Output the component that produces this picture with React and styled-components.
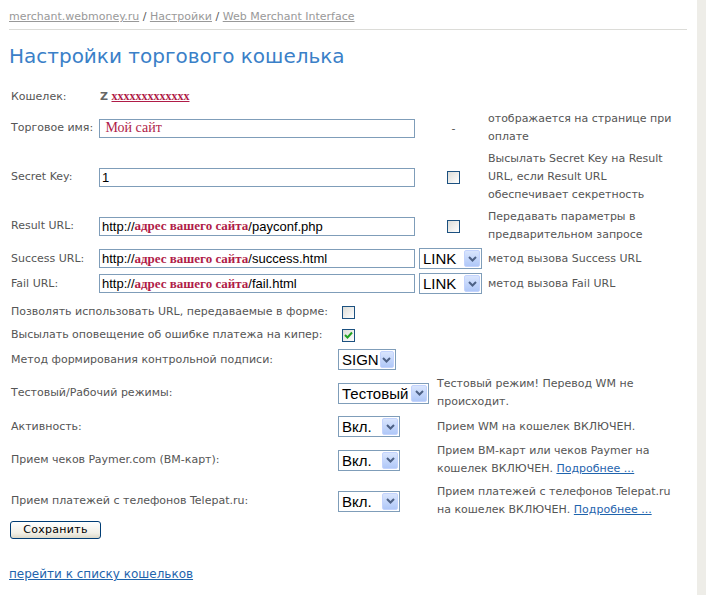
import styled, { createGlobalStyle } from 'styled-components'

const Global = createGlobalStyle`
  html, body { margin: 0; padding: 0; background: #eeede8; }
  body {
    font-family: "DejaVu Sans", Verdana, sans-serif;
    font-size: 11px;
    color: #555;
  }
`

const Page = styled.div`
  width: 697px;
  min-height: 595px;
  box-sizing: border-box;
  background: #fff;
  padding: 8px 10px 20px 9px;
`

const Crumbs = styled.div`
  line-height: 18px;
  padding-bottom: 3px;
  border-bottom: 1px solid #dcdcd8;
  color: #555;

  a {
    color: #999;
    text-decoration: underline;
  }
`

const Title = styled.h1`
  margin: 14px 0 0;
  font-size: 20px;
  line-height: 24px;
  font-weight: normal;
  color: #3a80c8;
`

const TopGrid = styled.div`
  margin-top: 19px;
  padding-left: 2px;
  display: grid;
  grid-template-columns: 88px 320px 69px 1fr;
  row-gap: 4px;
  align-items: center;
`

const BottomGrid = styled.div`
  margin-top: 9px;
  padding-left: 2px;
  display: grid;
  grid-template-columns: 327px 99px 1fr;
  row-gap: 5px;
  align-items: center;
`

const Label = styled.div`
  line-height: 18px;
  white-space: nowrap;
`

const Desc = styled.div`
  line-height: 18px;
`

const Cell = styled.div`
  display: flex;
  align-items: center;
  justify-content: ${(p) => (p.$center ? 'center' : 'flex-start')};
  grid-column: ${(p) => p.$span || 'auto'};
  padding-left: ${(p) => p.$indent || 0}px;
`

const Wallet = styled.div`
  grid-column: 2 / 5;
  line-height: 18px;
  padding-left: 1px;

  b {
    color: #666;
    font-weight: bold;
  }
`

const Red = styled.span`
  font-family: "Liberation Serif", "Times New Roman", serif;
  font-size: ${(p) => p.$size || 12}px;
  font-weight: ${(p) => (p.$bold ? 'bold' : 'normal')};
  color: #b01c48;
  text-decoration: ${(p) => (p.$under ? 'underline' : 'none')};
`

const Field = styled.div`
  width: 316px;
  height: 19px;
  box-sizing: border-box;
  border: 1px solid #7f9db9;
  padding: 0 2px;
  display: flex;
  align-items: center;
  white-space: nowrap;
  font-family: "Liberation Sans", Arial, sans-serif;
  font-size: 13px;
  color: #000;
  background: #fff;
`

const SelectBox = styled.div`
  width: ${(p) => p.$w}px;
  height: 21px;
  box-sizing: border-box;
  border: 1px solid #7f9db9;
  display: flex;
  align-items: stretch;
  background: #fff;
  font-family: "Liberation Sans", Arial, sans-serif;
  font-size: 15px;
  color: #000;
`

const SelectText = styled.span`
  flex: 1;
  display: flex;
  align-items: center;
  padding-left: 3px;
`

const Arrow = styled.span`
  width: 16px;
  margin: 1px;
  border-radius: 2px;
  background: linear-gradient(#d9e5fd, #b0c8f8);
  border: 1px solid #c3d3fd;
  box-sizing: border-box;
  display: flex;
  align-items: center;
  justify-content: center;
`

const Check = styled.span`
  width: 13px;
  height: 13px;
  box-sizing: border-box;
  border: 1px solid #1c5180;
  background: linear-gradient(135deg, #dcdcd7, #fff);
  display: inline-flex;
  align-items: center;
  justify-content: center;
`

const Button = styled.button`
  margin: 2px 0 0 1px;
  width: 91px;
  height: 18px;
  padding: 0;
  border: 1px solid #003c74;
  border-radius: 3px;
  background: linear-gradient(#fff, #f1efe6 70%, #dcd8c8);
  font-family: "DejaVu Sans", Verdana, sans-serif;
  font-size: 11px;
  letter-spacing: 0.3px;
  line-height: 14px;
  color: #000;
`

const Link = styled.a`
  display: inline-block;
  margin-top: 26px;
  font-size: 12px;
  line-height: 18px;
  color: #1f64ad;
  text-decoration: underline;
`

const More = styled.a`
  color: #1f64ad;
  text-decoration: underline;
`

const Select = ({ value, w }) => (
  <SelectBox $w={w}>
    <SelectText>{value}</SelectText>
    <Arrow>
      <svg width="9" height="6" viewBox="0 0 9 6">
        <path d="M1 1 L4.5 4.5 L8 1" fill="none" stroke="#4d6185" strokeWidth="2" />
      </svg>
    </Arrow>
  </SelectBox>
)

const CheckBox = ({ checked }) => (
  <Check>
    {checked && (
      <svg width="9" height="8" viewBox="0 0 9 8">
        <path d="M1 4 L3.5 6.5 L8 1.5" fill="none" stroke="#21a121" strokeWidth="2" />
      </svg>
    )}
  </Check>
)

const Site = () => (
  <>
    http://<Red $bold $size={13}>адрес вашего сайта</Red>
  </>
)

export default function App() {
  return (
    <>
      <Global />
      <Page>
        <Crumbs>
          <a>merchant.webmoney.ru</a> / <a>Настройки</a> / <a>Web Merchant Interface</a>
        </Crumbs>
        <Title>Настройки торгового кошелька</Title>

        <TopGrid>
          <Label>Кошелек:</Label>
          <Wallet>
            <b>Z</b> <Red $bold $under $size={12}>xxxxxxxxxxxxx</Red>
          </Wallet>

          <Label>Торговое имя:</Label>
          <Cell>
            <Field>
              <Red $size={14}>&nbsp;Мой сайт</Red>
            </Field>
          </Cell>
          <Cell $center>-</Cell>
          <Desc>отображается на странице при оплате</Desc>

          <Label>Secret Key:</Label>
          <Cell>
            <Field>1</Field>
          </Cell>
          <Cell $center>
            <CheckBox />
          </Cell>
          <Desc>Высылать Secret Key на Result URL, если Result URL обеспечивает секретность</Desc>

          <Label>Result URL:</Label>
          <Cell>
            <Field>
              <Site />/payconf.php
            </Field>
          </Cell>
          <Cell $center>
            <CheckBox />
          </Cell>
          <Desc>Передавать параметры в предварительном запросе</Desc>

          <Label>Success URL:</Label>
          <Cell>
            <Field>
              <Site />/success.html
            </Field>
          </Cell>
          <Cell>
            <Select value="LINK" w={63} />
          </Cell>
          <Desc>метод вызова Success URL</Desc>

          <Label>Fail URL:</Label>
          <Cell>
            <Field>
              <Site />/fail.html
            </Field>
          </Cell>
          <Cell>
            <Select value="LINK" w={63} />
          </Cell>
          <Desc>метод вызова Fail URL</Desc>
        </TopGrid>

        <BottomGrid>
          <Label>Позволять использовать URL, передаваемые в форме:</Label>
          <Cell $span="2 / 4" $indent={4}>
            <CheckBox />
          </Cell>

          <Label>Высылать оповещение об ошибке платежа на кипер:</Label>
          <Cell $span="2 / 4" $indent={4}>
            <CheckBox checked />
          </Cell>

          <Label>Метод формирования контрольной подписи:</Label>
          <Cell $span="2 / 4">
            <Select value="SIGN" w={58} />
          </Cell>

          <Label>Тестовый/Рабочий режимы:</Label>
          <Cell>
            <Select value="Тестовый" w={91} />
          </Cell>
          <Desc>Тестовый режим! Перевод WM не происходит.</Desc>

          <Label>Активность:</Label>
          <Cell>
            <Select value="Вкл." w={62} />
          </Cell>
          <Desc>Прием WM на кошелек ВКЛЮЧЕН.</Desc>

          <Label>Прием чеков Paymer.com (ВМ-карт):</Label>
          <Cell>
            <Select value="Вкл." w={62} />
          </Cell>
          <Desc>
            Прием ВМ-карт или чеков Paymer на кошелек ВКЛЮЧЕН. <More>Подробнее ...</More>
          </Desc>

          <Label>Прием платежей с телефонов Telepat.ru:</Label>
          <Cell>
            <Select value="Вкл." w={62} />
          </Cell>
          <Desc>
            Прием платежей с телефонов Telepat.ru на кошелек ВКЛЮЧЕН. <More>Подробнее ...</More>
          </Desc>
        </BottomGrid>

        <Button>Сохранить</Button>
        <div>
          <Link>перейти к списку кошельков</Link>
        </div>
      </Page>
    </>
  )
}
